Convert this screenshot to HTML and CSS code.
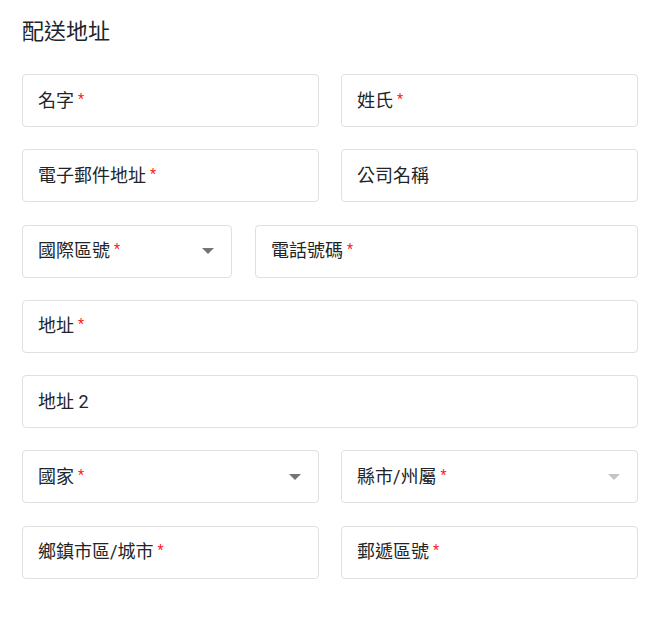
FILE: index.html
```html
<!DOCTYPE html>
<html lang="zh-Hant">
<head>
<meta charset="utf-8">
<link rel="stylesheet" href="styles.css">
</head>
<body>
<form class="address">
  <h2 class="title">配送地址</h2>
  <div class="rows">
    <div class="row">
      <div class="field"><span class="label">名字</span><span class="req">*</span></div>
      <div class="field"><span class="label">姓氏</span><span class="req">*</span></div>
    </div>
    <div class="row">
      <div class="field"><span class="label">電子郵件地址</span><span class="req">*</span></div>
      <div class="field"><span class="label">公司名稱</span></div>
    </div>
    <div class="row phone">
      <div class="field select code"><span class="label">國際區號</span><span class="req">*</span><span class="arrow"></span></div>
      <div class="field"><span class="label">電話號碼</span><span class="req">*</span></div>
    </div>
    <div class="row">
      <div class="field"><span class="label">地址</span><span class="req">*</span></div>
    </div>
    <div class="row">
      <div class="field"><span class="label">地址 2</span></div>
    </div>
    <div class="row">
      <div class="field select"><span class="label">國家</span><span class="req">*</span><span class="arrow"></span></div>
      <div class="field select"><span class="label">縣市/州屬</span><span class="req">*</span><span class="arrow disabled"></span></div>
    </div>
    <div class="row">
      <div class="field"><span class="label">鄉鎮市區/城市</span><span class="req">*</span></div>
      <div class="field"><span class="label">郵遞區號</span><span class="req">*</span></div>
    </div>
  </div>
</form>
</body>
</html>
```
FILE: styles.css
```css
html, body {
  margin: 0;
  padding: 0;
  background: #ffffff;
}
body {
  font-family: Roboto, "Noto Sans CJK TC", "Noto Sans", sans-serif;
  color: #212529;
}
.address {
  width: 616px;
  margin: 0 0 0 22px;
  padding-top: 17px;
}
.title {
  margin: 0 0 27px 0;
  font-size: 22px;
  font-weight: 400;
  line-height: 30px;
  color: #212529;
}
.rows {
  display: flex;
  flex-direction: column;
  gap: 22.3px;
}
.row {
  display: flex;
  gap: 22px;
}
.row.phone {
  gap: 23px;
}
.field {
  flex: 1 1 0;
  box-sizing: border-box;
  height: 53px;
  border: 1px solid #e0e0e0;
  border-radius: 4px;
  display: flex;
  align-items: center;
  padding: 0 17px 0 15px;
  font-size: 18px;
  line-height: 22px;
}
.field.code {
  flex: 0 0 210px;
}
.label {
  color: #212529;
}
.req {
  color: #ff1a1a;
  font-size: 14px;
  margin-left: 4px;
  position: relative;
  top: -2px;
}
.select {
  position: relative;
}
.arrow {
  margin-left: auto;
  width: 0;
  height: 0;
  border-left: 6px solid transparent;
  border-right: 6px solid transparent;
  border-top: 6px solid #757575;
}
.arrow.disabled {
  border-top-color: #c4c4c4;
}
```
